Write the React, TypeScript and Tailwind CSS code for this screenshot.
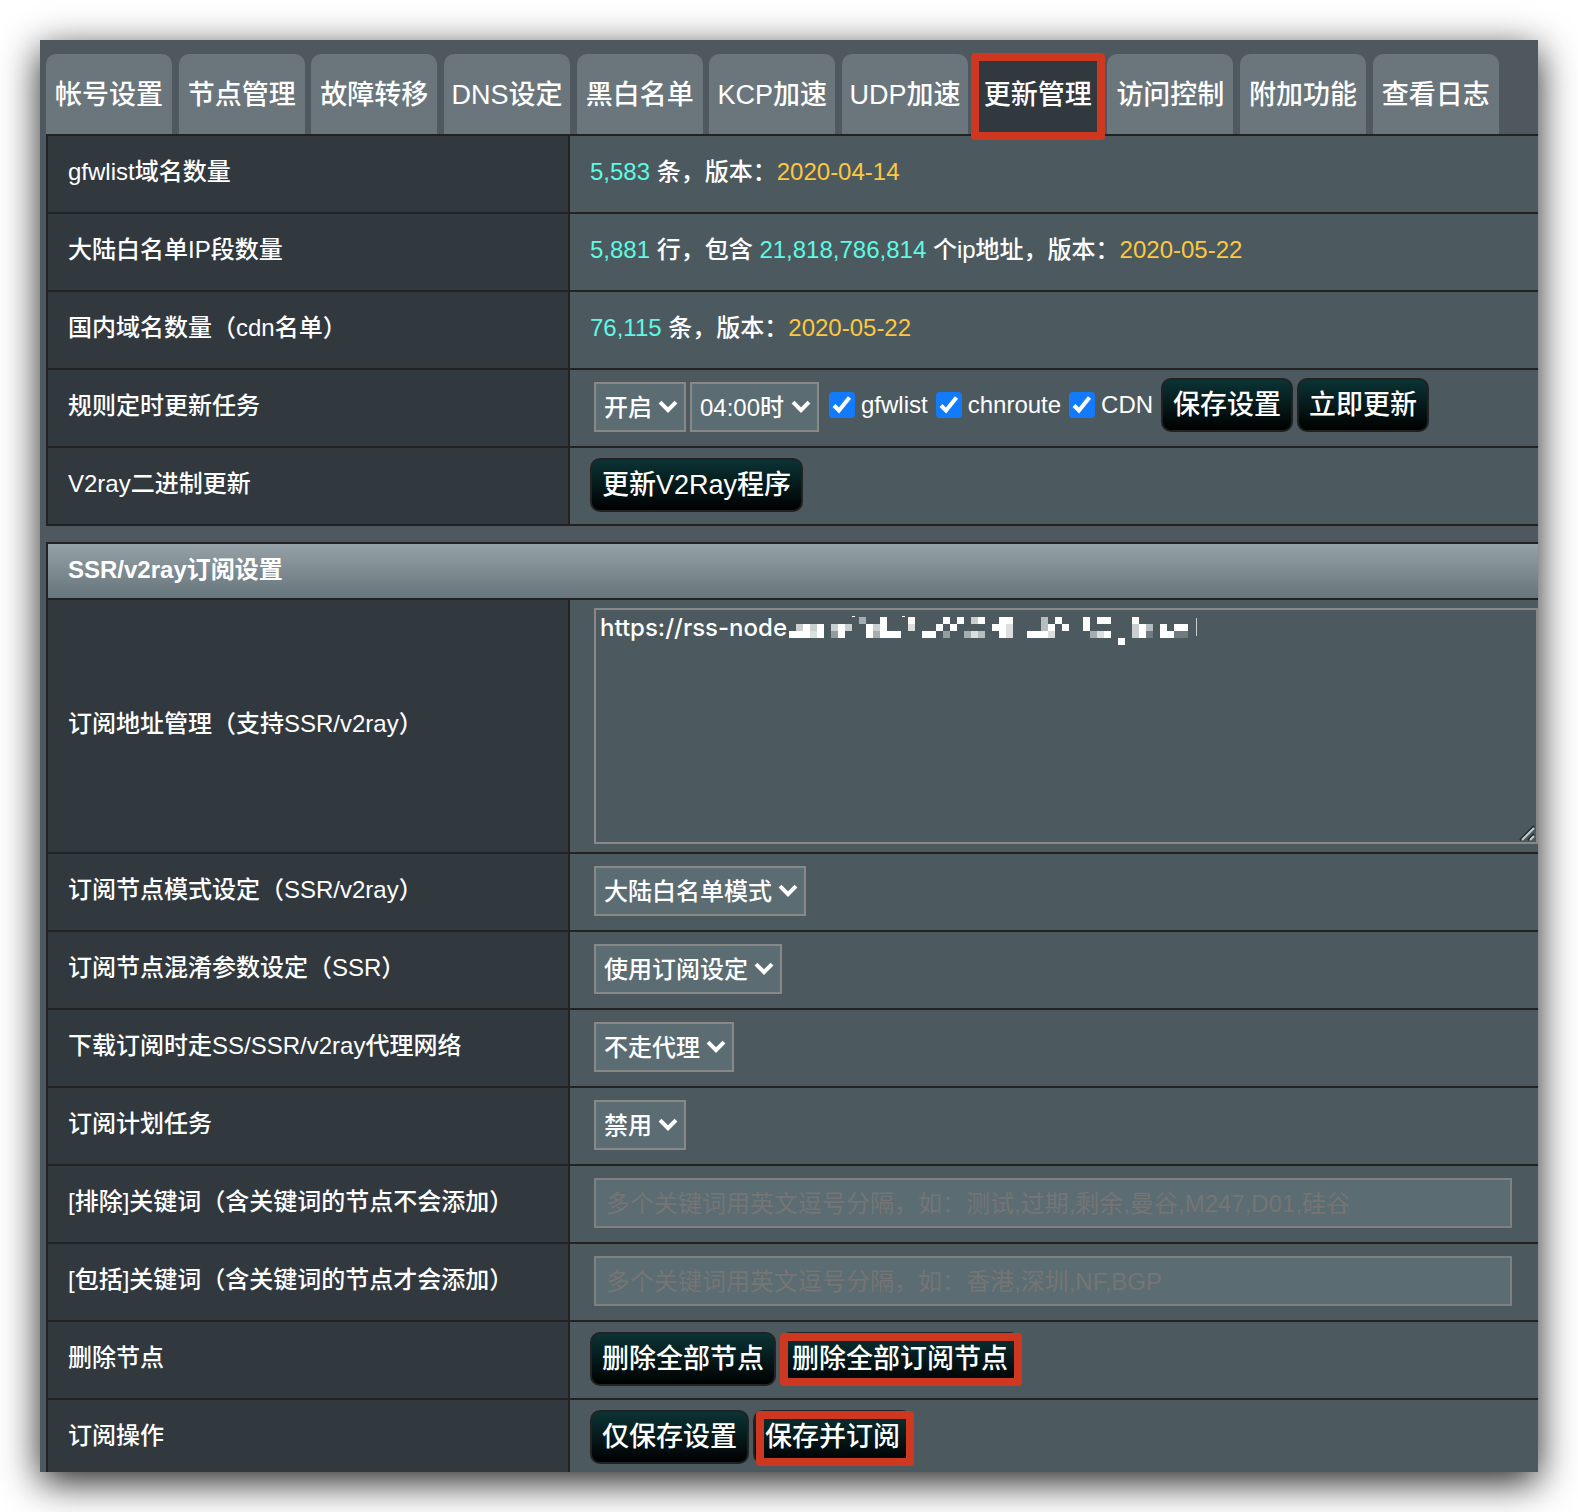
import React, { Fragment, useState } from "react";
import clsx from "clsx";

const tabs = ["帐号设置", "节点管理", "故障转移", "DNS设定", "黑白名单", "KCP加速", "UDP加速", "更新管理", "访问控制", "附加功能", "查看日志"];

// opacity of each 7px block, in tenths
const maskRows = [
  "..........5..9...9....9.9.79..99....6.9...9.99...9",
  ".7979.797..979...8...9.9.....998....69.9..9......796.9.99",
  "99989.49...95999...99.4..586..98..9998.....589...792.9922",
  "...............................................9",
];

function Mask() {
  return (
    <svg aria-hidden="true" width="412" height="30" viewBox="0 0 412 30" fill="#fff" shapeRendering="crispEdges" className="absolute left-[195px] top-2 pointer-events-none">
      {maskRows.map((row, y) =>
        row.split("").map((c, x) => c !== "." && <rect key={`${x}-${y}`} x={x * 7} y={[1, 8, 15, 22][y]} width="7" height="7" opacity={c === "9" ? 1 : Number(c) / 10} />)
      )}
      <rect x="63" y="0" width="3" height="1" />
      <rect x="113" y="0" width="3" height="1" />
      <rect x="407" y="2" width="1" height="18" opacity="0.7" />
    </svg>
  );
}

function Mark({ className }: { className: string }) {
  return <span aria-hidden="true" className={clsx("absolute border-8 border-[#ce3820] rounded pointer-events-none", className)} />;
}

function Row({ label, htmlFor, className = "pl-5 pt-2.5", children }: { label: string; htmlFor?: string; className?: string; children: React.ReactNode }) {
  return (
    <tr className="h-[78px]">
      <th scope="row" className="w-[522px] border-2 border-[#222] bg-[#31393f] pl-5 pb-1 text-left font-medium">
        {htmlFor ? <label htmlFor={htmlFor}>{label}</label> : label}
      </th>
      <td className={clsx("border-2 border-[#222] bg-[#4c5a5f] align-top", className)}>{children}</td>
    </tr>
  );
}

function Select({ id, label, options }: { id?: string; label?: string; options: string[] }) {
  return (
    <span className="relative inline-block align-top">
      <select id={id} aria-label={label} className="block h-[50px] appearance-none border-2 border-[#888] bg-[#5b6c72] pl-2 pr-8 pt-0.5 text-2xl leading-8 text-white outline-none">
        {options.map((o) => <option key={o}>{o}</option>)}
      </select>
      <svg aria-hidden="true" width="20" height="14" viewBox="0 0 20 14" fill="none" stroke="#fff" strokeWidth="4" className="absolute right-2 top-[18px] pointer-events-none">
        <path d="M2 2.2L10 10.2L18 2.2" />
      </svg>
    </span>
  );
}

function Button({ children, marked }: { children: React.ReactNode; marked?: string }) {
  return (
    <button type="button" className="relative h-[54px] shrink-0 rounded-[10px] border-2 border-[#222] bg-linear-to-b/srgb from-[#0b3335] to-black px-2.5 text-[27px] leading-8 whitespace-nowrap">
      {children}
      {marked && <Mark className={marked} />}
    </button>
  );
}

function Check({ label }: { label: string }) {
  const [on, setOn] = useState(true);
  return (
    <label className="flex items-center gap-1.5">
      <span className="relative size-[26px]">
        <input type="checkbox" checked={on} onChange={(e) => setOn(e.target.checked)} className="block size-full appearance-none rounded bg-white checked:bg-[#127bfb]" />
        {on && (
          <svg aria-hidden="true" viewBox="0 0 26 26" fill="none" stroke="#fff" strokeWidth="4" className="absolute inset-0 pointer-events-none">
            <path d="M5 13.5L10 18.6L20.5 5.5" />
          </svg>
        )}
      </span>
      {label}
    </label>
  );
}

const Count = ({ children }: { children: string }) => <span className="text-[#5ff8e3]">{children}</span>;
const Version = ({ children }: { children: string }) => <span className="text-[#fcc83f]">{children}</span>;

export default function App() {
  const [active, setActive] = useState("更新管理");
  const [urls, setUrls] = useState("https://rss-node");

  return (
    <div className="bg-white p-10 font-['Liberation_Sans','Noto_Sans_CJK_SC',sans-serif] text-2xl leading-8 font-medium text-white">
      <main className="bg-[#4f585f] shadow-[0_10px_36px_rgba(0,0,0,0.87)]">
        <div className="overflow-hidden pl-1.5 pt-3.5">
          <nav>
            {tabs.map((t) => (
              <Fragment key={t}>
                <button type="button" onClick={() => setActive(t)} className={clsx("relative h-20 w-[126px] rounded-t-[10px] pt-0.5 align-top text-[27px] whitespace-nowrap", active === t ? "bg-[#31393f]" : "bg-[#6a767c]")}>
                  {t}
                  {active === t && <Mark className="-left-1 -right-1 -top-px -bottom-1.5 z-10" />}
                </button>{" "}
              </Fragment>
            ))}
          </nav>

          <table className="w-[calc(100%+2px)] table-fixed border-collapse">
            <tbody>
              <Row label="gfwlist域名数量" className="pl-5 pt-5">
                <Count>5,583</Count> 条，版本：<Version>2020-04-14</Version>
              </Row>
              <Row label="大陆白名单IP段数量" className="pl-5 pt-5">
                <Count>5,881</Count> 行，包含 <Count>21,818,786,814</Count> 个ip地址，版本：<Version>2020-05-22</Version>
              </Row>
              <Row label="国内域名数量（cdn名单）" className="pl-5 pt-5">
                <Count>76,115</Count> 条，版本：<Version>2020-05-22</Version>
              </Row>
              <Row label="规则定时更新任务" className="pl-6 pt-2">
                <div className="flex items-center gap-2">
                  <div className="flex gap-1 self-end pr-0.5">
                    <Select label="定时更新" options={["开启", "关闭"]} />
                    <Select label="更新时间" options={["04:00时", "05:00时", "06:00时"]} />
                  </div>
                  <Check label="gfwlist" />
                  <Check label="chnroute" />
                  <Check label="CDN" />
                  <div className="flex gap-1">
                    <Button>保存设置</Button>
                    <Button>立即更新</Button>
                  </div>
                </div>
              </Row>
              <Row label="V2ray二进制更新">
                <Button>更新V2Ray程序</Button>
              </Row>
            </tbody>
          </table>

          <table className="mt-4 -mb-1.5 w-[calc(100%+2px)] table-fixed border-collapse">
            <colgroup>
              <col className="w-[522px]" />
              <col />
            </colgroup>
            <thead>
              <tr className="h-14">
                <th colSpan={2} className="border-2 border-[#222] bg-linear-to-b from-[#95a1a6] to-[#67757c] pl-5 pb-0.5 text-left font-bold">SSR/v2ray订阅设置</th>
              </tr>
            </thead>
            <tbody>
              <Row label="订阅地址管理（支持SSR/v2ray）" htmlFor="urls" className="pl-6 py-2">
                <div className="relative">
                  <textarea id="urls" value={urls} onChange={(e) => setUrls(e.target.value)} spellCheck={false} className="block h-[236px] w-full resize-none border-2 border-[#888] bg-[#4c5a5f] px-1 py-0.5 font-['Inter','Noto_Sans_CJK_SC',sans-serif] text-2xl leading-8 outline-none" />
                  <Mask />
                  <svg aria-hidden="true" width="16" height="16" viewBox="0 0 16 16" className="absolute right-[3px] bottom-[3px] pointer-events-none" strokeWidth="2">
                    <path d="M1 15L15 1M9 15L15 9" stroke="#222a2e" />
                    <path d="M3 15L15 3M11 15L15 11" stroke="#c4c9cb" />
                  </svg>
                </div>
              </Row>
              <Row label="订阅节点模式设定（SSR/v2ray）" htmlFor="mode" className="pl-6 pt-3">
                <Select id="mode" options={["大陆白名单模式"]} />
              </Row>
              <Row label="订阅节点混淆参数设定（SSR）" htmlFor="obfs" className="pl-6 pt-3">
                <Select id="obfs" options={["使用订阅设定"]} />
              </Row>
              <Row label="下载订阅时走SS/SSR/v2ray代理网络" htmlFor="proxy" className="pl-6 pt-3">
                <Select id="proxy" options={["不走代理"]} />
              </Row>
              <Row label="订阅计划任务" htmlFor="plan" className="pl-6 pt-3">
                <Select id="plan" options={["禁用"]} />
              </Row>
              <Row label="[排除]关键词（含关键词的节点不会添加）" htmlFor="exclude" className="pl-6 pr-[26px] pt-3">
                <input id="exclude" type="text" placeholder="多个关键词用英文逗号分隔，如：测试,过期,剩余,曼谷,M247,D01,硅谷" className="block h-[50px] w-full border-2 border-[#808080] bg-[#5b6c72] px-2.5 pt-0.5 font-normal outline-none placeholder:text-[#757575]" />
              </Row>
              <Row label="[包括]关键词（含关键词的节点才会添加）" htmlFor="include" className="pl-6 pr-[26px] pt-3">
                <input id="include" type="text" placeholder="多个关键词用英文逗号分隔，如：香港,深圳,NF,BGP" className="block h-[50px] w-full border-2 border-[#808080] bg-[#5b6c72] px-2.5 pt-0.5 font-normal outline-none placeholder:text-[#757575]" />
              </Row>
              <Row label="删除节点">
                <div className="flex gap-1">
                  <Button>删除全部节点</Button>
                  <Button marked="-left-0.5 -right-1 -top-px -bottom-0.5">删除全部订阅节点</Button>
                </div>
              </Row>
              <Row label="订阅操作">
                <div className="flex gap-1">
                  <Button>仅保存设置</Button>
                  <Button marked="left-px -right-1 -top-px -bottom-1">保存并订阅</Button>
                </div>
              </Row>
            </tbody>
          </table>
        </div>
      </main>
    </div>
  );
}
